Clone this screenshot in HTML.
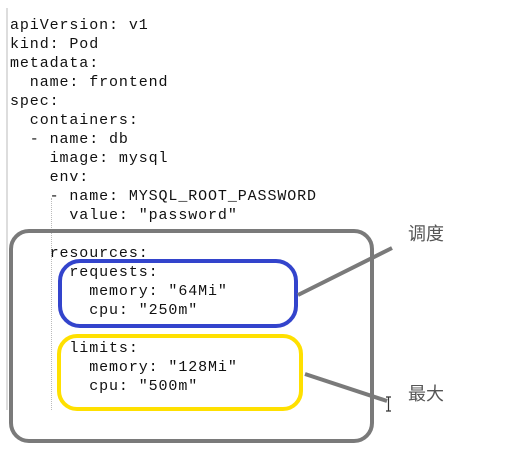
<!DOCTYPE html>
<html><head><meta charset="utf-8"><style>
html,body{margin:0;padding:0;background:#fff;width:510px;height:472px;overflow:hidden;position:relative}
pre{position:absolute;left:10px;top:16px;margin:0;font-family:"Liberation Mono","Courier New",monospace;font-size:15px;letter-spacing:0.9px;line-height:19px;color:#111}
.cn{position:absolute;font-family:"Liberation Sans","Noto Sans CJK SC",sans-serif;font-size:18px;color:#555}
</style></head><body>
<div style="position:absolute;left:6px;top:8px;width:2px;height:402px;background:#ddd"></div>
<div style="position:absolute;left:51px;top:198px;width:0;height:212px;border-left:1px dotted #bbb"></div>
<pre>apiVersion: v1
kind: Pod
metadata:
  name: frontend
spec:
  containers:
  - name: db
    image: mysql
    env:
    - name: MYSQL_ROOT_PASSWORD
      value: "password"

    resources:
      requests:
        memory: "64Mi"
        cpu: "250m"

      limits:
        memory: "128Mi"
        cpu: "500m"</pre>
<svg width="510" height="472" style="position:absolute;left:0;top:0">
<rect x="11" y="231" width="361" height="210" rx="18" fill="none" stroke="#7a7a7a" stroke-width="4"/>
<rect x="60" y="261" width="236" height="65" rx="20" fill="none" stroke="#3344cc" stroke-width="4"/>
<rect x="59" y="336" width="242" height="73" rx="18" fill="none" stroke="#ffe000" stroke-width="4"/>
<line x1="298" y1="295" x2="392" y2="248" stroke="#7a7a7a" stroke-width="4"/>
<line x1="305" y1="374" x2="387" y2="401" stroke="#7a7a7a" stroke-width="4"/>
<path d="M386 397h5M388.5 397v14M386 411h5" stroke="#333" stroke-width="1.2" fill="none"/>
</svg>
<div class="cn" style="left:408px;top:220px">调度</div>
<div class="cn" style="left:408px;top:380px">最大</div>
</body></html>
